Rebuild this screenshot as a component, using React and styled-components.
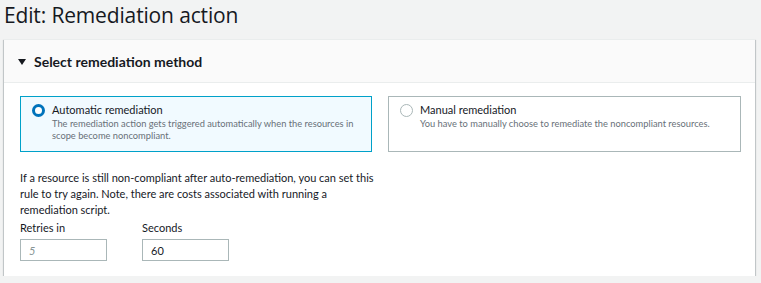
import React from "react";
import styled, { createGlobalStyle } from "styled-components";

const Global = createGlobalStyle`
  html, body { margin: 0; padding: 0; background: #f2f3f3; }
  body { font-family: Lato, "Noto Sans", Arial, sans-serif; color: #16191f; }
  * { box-sizing: border-box; }
`;

const Page = styled.div`
  padding: 0 6px 0 4px;
`;

const Title = styled.h1`
  margin: 0;
  padding: 2px 0 0 0;
  height: 39px;
  font-family: "Open Sans", sans-serif;
  font-size: 21px;
  font-weight: 400;
  line-height: 26px;
  color: #16191f;
  letter-spacing: -0.15px;
`;

const Card = styled.section`
  background: #fff;
  border-top: 1px solid #eaeded;
  box-shadow: 0 1px 1px 0 rgba(0, 28, 36, 0.35), 1px 1px 1px 0 rgba(0, 28, 36, 0.15),
    -1px 1px 1px 0 rgba(0, 28, 36, 0.15);
`;

const Header = styled.div`
  height: 43px;
  background: #fafafa;
  border-bottom: 1px solid #eaeded;
  display: flex;
  align-items: center;
  gap: 8px;
  padding: 0 0 0 14px;
  font-size: 14px;
  font-weight: 700;
`;

const Caret = styled.span`
  display: inline-block;
  width: 0;
  height: 0;
  border-left: 4px solid transparent;
  border-right: 4px solid transparent;
  border-top: 6px solid #16191f;
  margin-top: 1px;
`;

const Body = styled.div`
  padding: 13px 16px 15px 16px;
`;

const Tiles = styled.div`
  display: grid;
  grid-template-columns: 352px 353px;
  gap: 16px;
`;

const Tile = styled.label`
  display: flex;
  align-items: flex-start;
  gap: 7px;
  height: 56px;
  padding: 5px 12px 6px 11px;
  border: 1px solid ${(p) => (p.$selected ? "#00a1c9" : "#aab7b8")};
  background: ${(p) => (p.$selected ? "#f1faff" : "#fff")};
`;

const Radio = styled.span`
  flex: none;
  width: 13px;
  height: 13px;
  margin-top: 2px;
  border-radius: 50%;
  background: #fff;
  border: ${(p) => (p.$checked ? "3.5px solid #0073bb" : "1px solid #aab7b8")};
`;

const TileText = styled.div`
  display: flex;
  flex-direction: column;
`;

const TileTitle = styled.span`
  font-size: 11px;
  line-height: 16px;
  color: #16191f;
`;

const TileDesc = styled.span`
  font-size: 9.3px;
  line-height: 12px;
  color: #687078;
`;

const Para = styled.p`
  margin: 18px 0 0 0;
  width: 356px;
  font-size: 11px;
  line-height: 16px;
  color: #16191f;
`;

const Fields = styled.div`
  display: grid;
  grid-template-columns: 122px 122px;
  margin-top: 1px;
`;

const Field = styled.div`
  display: flex;
  flex-direction: column;
  gap: 2px;
`;

const Label = styled.span`
  font-size: 11px;
  line-height: 18px;
  color: #16191f;
`;

const Input = styled.input`
  width: 87px;
  height: 22px;
  border: 1px solid #aab7b8;
  padding: 0 8px;
  font-family: inherit;
  font-size: 11px;
  color: #16191f;
  background: #fff;
  outline: none;
  &::placeholder {
    color: #879596;
    font-style: italic;
  }
`;

export default function App() {
  return (
    <>
      <Global />
      <Page>
        <Title>Edit: Remediation action</Title>
        <Card>
          <Header>
            <Caret />
            Select remediation method
          </Header>
          <Body>
            <Tiles>
              <Tile $selected>
                <Radio $checked />
                <TileText>
                  <TileTitle>Automatic remediation</TileTitle>
                  <TileDesc>
                    The remediation action gets triggered automatically when the resources in
                    scope become noncompliant.
                  </TileDesc>
                </TileText>
              </Tile>
              <Tile>
                <Radio />
                <TileText>
                  <TileTitle>Manual remediation</TileTitle>
                  <TileDesc>You have to manually choose to remediate the noncompliant resources.</TileDesc>
                </TileText>
              </Tile>
            </Tiles>
            <Para>
              If a resource is still non-compliant after auto-remediation, you can set this rule to
              try again. Note, there are costs associated with running a remediation script.
            </Para>
            <Fields>
              <Field>
                <Label>Retries in</Label>
                <Input placeholder="5" />
              </Field>
              <Field>
                <Label>Seconds</Label>
                <Input defaultValue="60" />
              </Field>
            </Fields>
          </Body>
        </Card>
      </Page>
    </>
  );
}
